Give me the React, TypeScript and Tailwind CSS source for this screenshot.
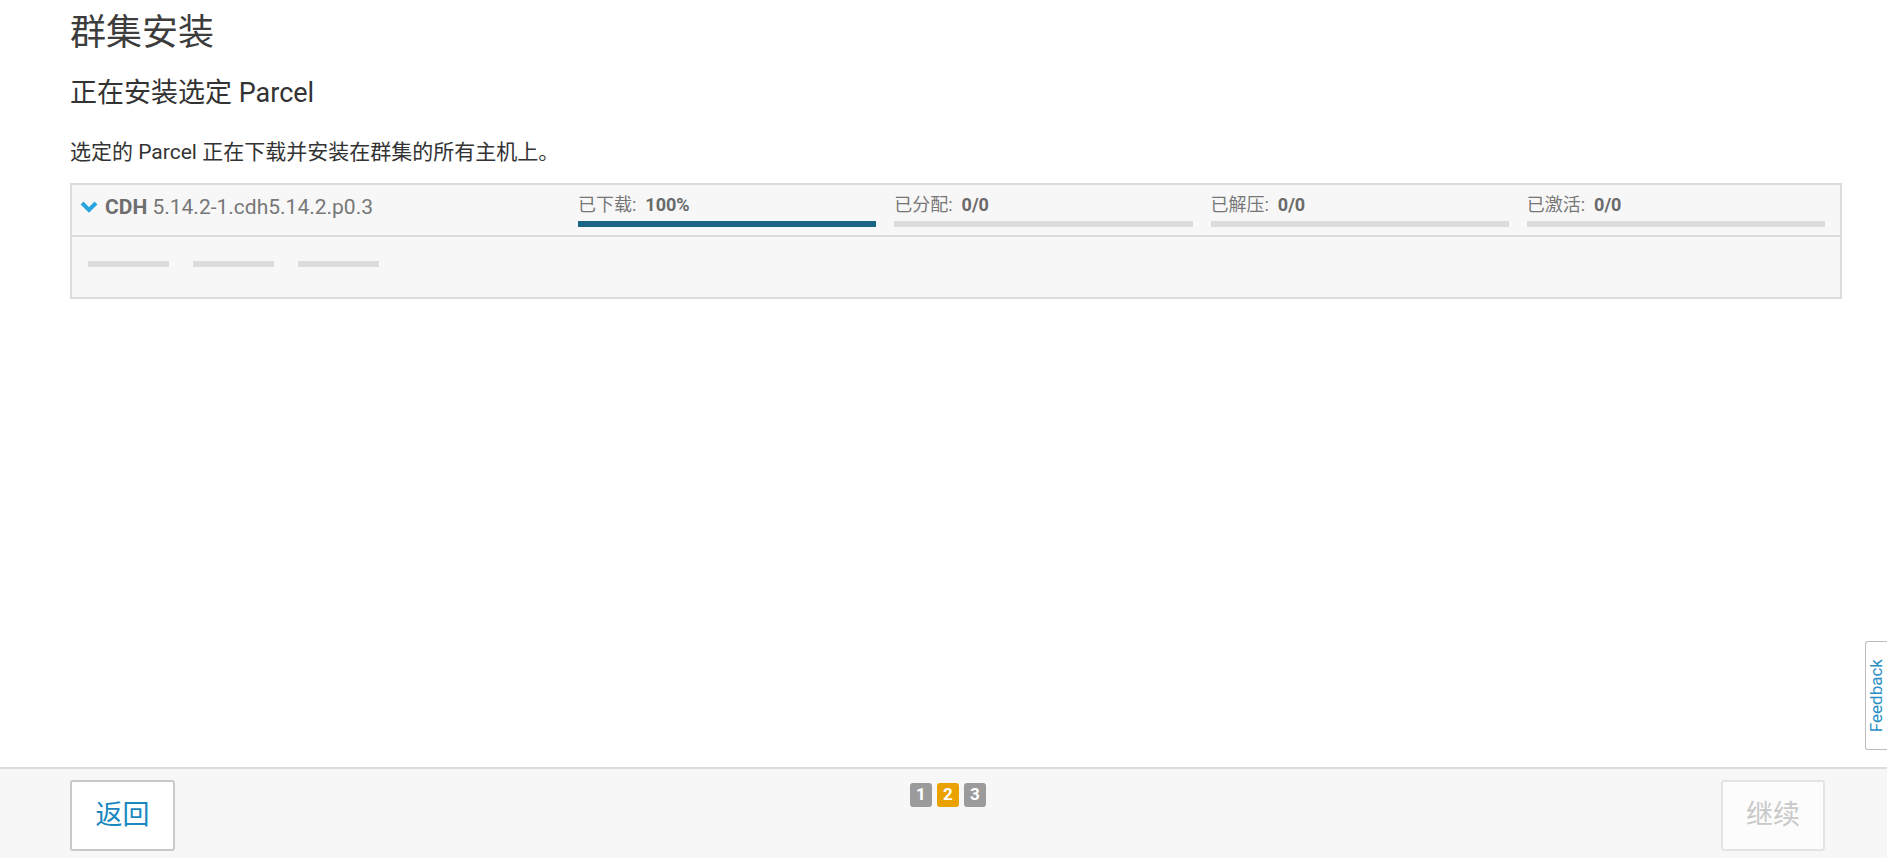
const font = { fontFamily: '"Roboto", "Noto Sans CJK SC", sans-serif' };

const stages = [
  { label: "已下载:", value: "100%", pct: 100 },
  { label: "已分配:", value: "0/0", pct: 0 },
  { label: "已解压:", value: "0/0", pct: 0 },
  { label: "已激活:", value: "0/0", pct: 0 },
];

function Chevron() {
  return (
    <svg width="18" height="12" viewBox="0 0 18 12" className="shrink-0">
      <polyline points="2,2 9,9 16,2" fill="none" stroke="#2ba3dc" strokeWidth="4" strokeLinecap="butt" />
    </svg>
  );
}

function ParcelCard() {
  return (
    <div className="border-2 border-[#dcdcdc] bg-[#f7f7f7]">
      {/* Header */}
      <div className="flex h-[52px] items-start pt-[9px] pl-[8px] pr-[15px] border-b-2 border-[#dcdcdc]">
        <div className="flex w-[498px] items-center gap-[7px] leading-[26px] text-[21px] text-[#777]">
          <Chevron />
          <span>
            <span className="font-bold text-[#6e6e6e]">CDH</span> 5.14.2-1.cdh5.14.2.p0.3
          </span>
        </div>
        <div className="grid flex-1 grid-cols-4 gap-x-[18px]">
          {stages.map((s) => (
            <div key={s.label} className="flex flex-col">
              <div className="flex items-center gap-[9px] text-[18px] leading-[22px] text-[#777]">
                <span>{s.label}</span>
                <span className="font-bold text-[#6a6a6a]">{s.value}</span>
              </div>
              <div className="mt-[5px] h-[6px] w-full bg-[#dcdcdc]">
                <div className="h-full bg-[#186584]" style={{ width: `${s.pct}%` }} />
              </div>
            </div>
          ))}
        </div>
      </div>
      {/* Body */}
      <div className="flex h-[60px] items-start gap-[24px] pt-[24px] pl-[16px]">
        <div className="h-[6px] w-[81px] bg-[#dcdcdc]" />
        <div className="h-[6px] w-[81px] bg-[#dcdcdc]" />
        <div className="h-[6px] w-[81px] bg-[#dcdcdc]" />
      </div>
    </div>
  );
}

export default function App() {
  return (
    <div className="relative flex h-screen flex-col overflow-hidden bg-white" style={font}>
      <main className="flex-1 pl-[70px] pr-[45px]">
        <h1 className="mt-[13px] text-[36px] leading-[40px] text-[#3d3d3d]">群集安装</h1>
        <h2 className="mt-[24px] text-[27px] leading-[32px] text-[#333]">正在安装选定 Parcel</h2>
        <p className="mt-[29px] text-[21px] leading-[28px] text-[#333]">
          选定的 Parcel 正在下载并安装在群集的所有主机上。
        </p>
        <div className="mt-[17px]">
          <ParcelCard />
        </div>
      </main>

      <footer className="flex h-[91px] items-start justify-between border-t-2 border-[#dcdcdc] bg-[#f7f7f7] pl-[70px] pr-[62px] pt-[11px]">
        <button className="flex h-[71px] w-[105px] items-center justify-center rounded-[3px] border-2 border-[#c8c8c8] bg-white text-[27px] text-[#1b87bf]">
          返回
        </button>
        <div className="mt-[3px] flex gap-[5px]">
          <span className="flex h-[24px] w-[22px] items-center justify-center rounded-[3px] bg-[#9b9b9b] text-[17px] font-bold text-white">1</span>
          <span className="flex h-[24px] w-[22px] items-center justify-center rounded-[3px] bg-[#e9a200] text-[17px] font-bold text-white">2</span>
          <span className="flex h-[24px] w-[22px] items-center justify-center rounded-[3px] bg-[#9b9b9b] text-[17px] font-bold text-white">3</span>
        </div>
        <button className="flex h-[71px] w-[104px] items-center justify-center rounded-[3px] border-2 border-[#e4e4e4] bg-[#fcfcfc] text-[27px] text-[#c9c9c9]">
          继续
        </button>
      </footer>

      <div className="absolute right-0 top-[641px] flex h-[109px] w-[22px] items-center justify-center rounded-l-[3px] border border-r-0 border-[#bdbdbd] bg-white">
        <span className="rotate-180 text-[17px] leading-none text-[#2a8fc4] [writing-mode:vertical-rl]">Feedback</span>
      </div>
    </div>
  );
}
